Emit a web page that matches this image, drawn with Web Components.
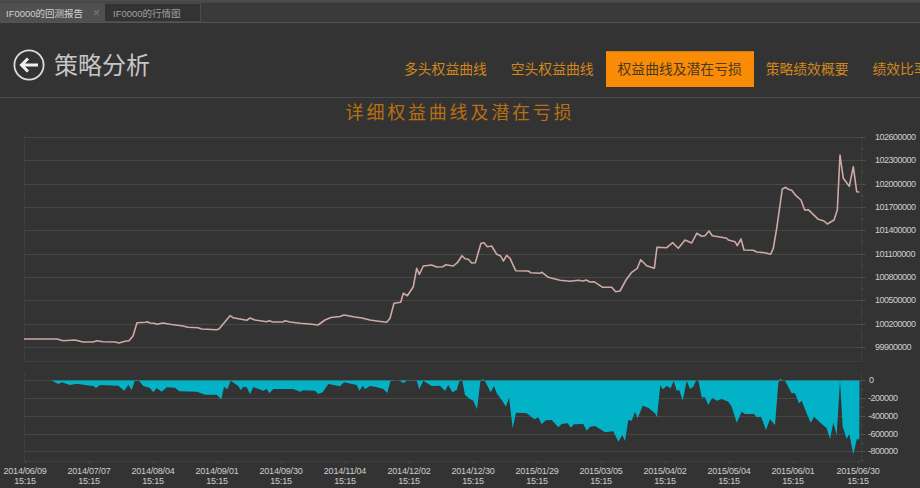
<!DOCTYPE html>
<html lang="zh-CN">

<head>
  <meta charset="UTF-8">
  <title>策略分析</title>
  <style>
    html, body { margin: 0; height: 488px; overflow: hidden; background: #333; }
    body { font-family: "Liberation Sans", "Noto Sans CJK SC", sans-serif; }
  </style>
</head>

<body>
  <tab-strip>
    <tab-item active closable>IF0000的回测报告</tab-item>
    <tab-item>IF0000的行情图</tab-item>
  </tab-strip>
  <report-header title-text="策略分析">
    <nav-item>多头权益曲线</nav-item>
    <nav-item>空头权益曲线</nav-item>
    <nav-item active>权益曲线及潜在亏损</nav-item>
    <nav-item>策略绩效概要</nav-item>
    <nav-item>绩效比率</nav-item>
  </report-header>
  <chart-title>详细权益曲线及潜在亏损</chart-title>
  <equity-chart></equity-chart>

  <script>
    const FONT = '"Liberation Sans", "Noto Sans CJK SC", sans-serif'

    class TabStrip extends HTMLElement {
      constructor() {
        super()
        this.attachShadow({ mode: 'open' }).innerHTML = `
          <style>
            :host {
              display: flex;
              height: 19px;
              padding-top: 3px;
              background: linear-gradient(#4c4c4c 0, #4c4c4c 2px, #3a3a3a 3px);
              border-bottom: 1px solid #555;
            }
          </style>
          <slot></slot>`
      }
    }
    customElements.define('tab-strip', TabStrip)

    class TabItem extends HTMLElement {
      constructor() {
        super()
        const closable = this.hasAttribute('closable')
        this.attachShadow({ mode: 'open' }).innerHTML = `
          <style>
            :host {
              display: flex;
              align-items: center;
              box-sizing: border-box;
              width: 96px;
              padding-left: 8px;
              font: 9.5px ${FONT};
              color: #a0a0a0;
              border: 1px solid #4a4a4a;
              border-left: 0;
              background: #333;
            }
            :host([active]) {
              width: 105px;
              padding-left: 6px;
              color: #d2d2d2;
              background: #505050;
              border: 0;
            }
            .close { margin-left: auto; margin-right: 5px; color: #7a7a7a; font-size: 13px; }
          </style>
          <slot></slot>${closable ? '<span class="close">×</span>' : ''}`
      }
    }
    customElements.define('tab-item', TabItem)

    class ReportHeader extends HTMLElement {
      constructor() {
        super()
        this.attachShadow({ mode: 'open' }).innerHTML = `
          <style>
            :host {
              display: flex;
              height: 74px;
              border-bottom: 1px solid #4a4a4a;
              overflow: hidden;
            }
            .brand {
              display: flex;
              align-items: center;
              gap: 9px;
              width: 392px;
              flex: none;
              box-sizing: border-box;
              padding: 20px 0 0 13px;
              height: 64px;
              font: 24px ${FONT};
              color: #c6c6c6;
            }
            .brand span { margin-bottom: 4px; }
            svg { display: block; flex: none; }
            nav { display: flex; align-items: flex-start; padding-top: 28px; }
          </style>
          <div class="brand">
            <svg width="32" height="32" viewBox="0 0 32 32">
              <circle cx="16" cy="16" r="14.6" fill="none" stroke="#dcdcdc" stroke-width="1.8"/>
              <path d="M8.5 16H25M15 9.5L8.5 16L15 22.5" fill="none" stroke="#f0f0f0" stroke-width="3"/>
            </svg>
            <span>${this.getAttribute('title-text')}</span>
          </div>
          <nav><slot></slot></nav>`
      }
    }
    customElements.define('report-header', ReportHeader)

    class NavItem extends HTMLElement {
      constructor() {
        super()
        this.attachShadow({ mode: 'open' }).innerHTML = `
          <style>
            :host {
              display: block;
              flex: none;
              box-sizing: border-box;
              height: 36px;
              padding: 0 12px;
              font: 13.8px/38px ${FONT};
              white-space: nowrap;
              color: #d2861c;
            }
            :host([active]) { background: #f98b06; color: #4a3a20; border-top: 1px solid #c67f1e; line-height: 36px; }
          </style>
          <slot></slot>`
      }
    }
    customElements.define('nav-item', NavItem)

    class ChartTitle extends HTMLElement {
      constructor() {
        super()
        this.attachShadow({ mode: 'open' }).innerHTML = `
          <style>
            :host {
              display: block;
              height: 29px;
              text-align: center;
              font: 18px/30px ${FONT};
              letter-spacing: 2.8px;
              color: #b96f12;
            }
          </style>
          <slot></slot>`
      }
    }
    customElements.define('chart-title', ChartTitle)

    // screen coordinates read off the original chart, y is relative to the page
    const EQUITY = [[24,339],[57,339],[63,340.7],[75,340],[83,342],[93,342],[97,340.7],[103,341.7],[115,342],[119,343],[125,341.3],[129,340.7],[133,336],[137,322.7],[146,322.3],[147.3,321.7],[150,323],[154,323.3],[156.7,324.3],[163,323],[170,324.3],[183,326],[188,327.3],[198,327.7],[201.7,329],[216.7,329.7],[219,329],[230,315.7],[233,317.7],[246.7,320.3],[250,318],[255,320],[266.7,321.7],[269,320.7],[273,322],[283,322],[285,320.7],[290,322],[300,323.3],[310,324],[318,325],[325,320],[331,317.5],[340,316.5],[344,315],[355,317],[362,318],[370,320],[376.7,321],[386.7,322.3],[390,318.3],[394,303.3],[400.7,302.3],[403.3,293.3],[407.3,295.7],[413.3,286.7],[416.7,268.3],[419.3,274.3],[423.3,266],[431.7,265],[436.7,267],[442.7,266.7],[446,264.7],[453.3,266],[457.3,262.7],[462,255.7],[465,258.7],[468.3,259.3],[471.7,263],[475.3,262.7],[481,243.3],[484,242.7],[487.3,246.7],[491.7,246],[496.7,254.3],[500.7,256],[503.3,261],[506.7,255.3],[510,258.3],[515.7,270.7],[528.3,271],[530.7,272.7],[540,273.3],[542,272.3],[548.3,277.3],[560,280.3],[570,281.3],[578.3,280.3],[583.3,281],[586,280],[590,282],[594,281.7],[602.7,287.3],[611.7,287.3],[615.7,291.7],[620,291],[626,280],[631.7,272.3],[637.3,268.3],[640.7,259.7],[646.7,265.7],[654.3,268.3],[657,247.3],[666.7,247.7],[672.7,242.7],[678.3,248.3],[685,240],[691.7,243],[696.7,233.3],[701.7,236.3],[705,235.7],[709,231],[712.3,235.7],[720,237],[726.7,238.3],[728.3,240],[735,241.7],[737.3,245.7],[741,239],[744,250],[753.3,250.3],[756.7,252],[765,252.7],[770.7,254.3],[773.3,248.3],[776.7,228.3],[782.3,189],[785.7,187.3],[788.3,189.3],[791.7,190.3],[796,195.7],[801,200],[804.7,210],[808.3,209.7],[818.3,219.3],[824,221],[827.3,224],[834,220],[837.3,210],[840,155],[843.3,178.3],[849.3,186.3],[853.3,166.7],[856.7,191.7],[859.3,192]]

    const DRAWDOWN = [[24,380.4],[51.7,380.4],[58.3,384],[61.7,382.3],[70,385],[76.7,383.7],[90,385.7],[93,385.7],[96,388],[100,385],[118.3,385.7],[124.3,390.7],[128.3,384.7],[131.7,390],[135,380],[138.3,380],[143.3,386],[150,388],[153.3,392.3],[156.7,388],[161.7,391.7],[166.7,387.3],[175,387.7],[179.3,391.3],[196.7,391.7],[205,394.7],[216.7,394.7],[221.3,399.3],[224,386.7],[227.3,389.3],[230.7,380.7],[238.3,386],[240.7,390],[243.3,386.7],[246.7,387.3],[250,394.3],[253.3,387],[263.3,390.7],[266.7,389],[269.3,393.3],[273.3,389],[293.3,389],[300,391.7],[303.3,390.3],[315,390.7],[318.3,394],[322.7,392.3],[328.3,384],[340,386.3],[344,382.3],[356.7,385],[359.3,390.7],[362.7,385.7],[365,389],[370,386],[375,386.7],[383.3,389],[387.3,393],[390.7,380],[400,380.7],[403.3,383.3],[406.7,380.7],[416.7,380.7],[419.3,389.3],[423.3,380.7],[431.7,386],[440,385.7],[445,390.7],[448.3,385],[452.3,392.3],[456.7,390],[460,379.3],[462.3,380.7],[465,395],[470,399],[473.3,400.7],[477,409.3],[480.3,381.7],[482.7,379],[485.3,381.7],[490.7,392.3],[494,386],[496.7,393.3],[501.7,400],[506,406.7],[509,397.3],[512.7,428.3],[516,412.7],[526.7,413.3],[534.3,419.3],[538.3,417.3],[541.7,424.3],[545.7,420.3],[551.7,420],[558.3,427.3],[561.7,424],[567.7,423.3],[570.7,427.7],[574,424.3],[583.3,424],[586.7,430.7],[590,426.7],[595,426],[600,429],[605,432.3],[613.3,431.3],[618.3,441.7],[622.3,435],[625,441],[628.3,420],[631.7,420.7],[635,411.7],[637.7,418.3],[642.7,405.7],[648.3,407.7],[655,413.3],[657,417.3],[660.3,385],[662.7,389.3],[666.7,386],[670.7,388.3],[673.7,380.7],[676.7,390.7],[679.3,390],[682.7,400.7],[686.7,380.7],[690,389],[693.3,386.7],[696,380.7],[698.3,380],[701.7,397.3],[705,397.3],[708.3,405],[712.3,397.7],[716.7,400.7],[721.7,399],[728.3,401.7],[731.7,406.7],[736.7,422.7],[741.7,411.7],[745,414],[754,414],[756.7,417.3],[761,416.7],[766,430],[770,419.3],[775,425],[778.3,383.3],[780,378.5],[781.7,380],[785,380.7],[791.7,393.3],[795,393.3],[799,403.3],[801.7,400.7],[806,411.7],[810.7,422.7],[814,416.7],[821.7,424],[826.7,428.3],[830,439],[833.3,422.7],[836.7,435],[840,380.7],[842.7,426.7],[846.7,439],[849.3,434],[853.3,454.3],[856.7,439.3],[859.3,439.3]]

    const DATES = ['2014/06/09','2014/07/07','2014/08/04','2014/09/01','2014/09/30','2014/11/04','2014/12/02','2014/12/30','2015/01/29','2015/03/05','2015/04/02','2015/05/04','2015/06/01','2015/06/30']

    class EquityChart extends HTMLElement {
      constructor() {
        super()
        // the svg starts at page y = 127
        const top = 127
        const left = 24.5, right = 861.5
        const toPts = (list) => list.map(([x, y]) => `${x},${(y - top).toFixed(1)}`).join(' ')
        let grid = ''
        let ticks = ''
        let labels = ''

        for (let i = 0; i < 10; i++) {
          const y = Math.round(137 + i * 23.33 - top) + 0.5
          grid += `<path d="M${left} ${y}H${right}"/>`
          ticks += `<path d="M${right} ${y}h4"/>`
          if (i < 9) ticks += `<path d="M${right} ${y + 11.5}h2"/>`
          labels += `<text x="875" y="${y + 2.5}">${102600000 - i * 300000}</text>`
        }
        for (let i = 0; i < 5; i++) {
          const y = Math.round(380.4 + i * 17.75 - top) + 0.5
          grid += `<path d="M${left} ${y}H${right}"/>`
          ticks += `<path d="M${right} ${y}h4"/>`
          ticks += `<path d="M${right} ${y + 9}h2"/>`
          const value = i === 0 ? '0' : '-' + i * 200000
          labels += `<text x="${i === 0 ? 869 : 868}" y="${y + 2.5}">${value}</text>`
        }

        let dates = ''
        DATES.forEach((d, i) => {
          const x = i === 13 ? 858 : 25 + i * 64
          ticks += `<path d="M${x}.5 ${461 - top}v2"/>`
          dates += `<text class="date" x="${x}" y="${474 - top}" text-anchor="middle">${d}</text>`
          dates += `<text class="date" x="${x}" y="${484 - top}" text-anchor="middle">15:15</text>`
        })

        this.attachShadow({ mode: 'open' }).innerHTML = `
          <style>
            :host { display: block; height: 361px; }
            svg { display: block; }
            text { font: 9px ${FONT}; fill: #cfcfcf; letter-spacing: -0.5px; }
            text.date { letter-spacing: -0.2px; }
            .grid path { stroke: #474747; fill: none; }
            .ticks path { stroke: #505050; fill: none; }
            .panel { stroke: #3e3e3e; fill: none; }
          </style>
          <svg width="920" height="361" viewBox="0 0 920 361">
            <path class="panel" d="M${left} 7V${361.5 - top}H${right}V7M${left} ${372.5 - top}V${461.5 - top}H${right}V${372.5 - top}"/>
            <g class="grid">${grid}</g>
            <g class="ticks">${ticks}</g>
            <polygon points="24,253.4 ${toPts(DRAWDOWN)} 859.5,253.4" fill="#02b3c8"/>
            <polyline points="${toPts(EQUITY)}" fill="none" stroke="#cfa9a6" stroke-width="1.6" stroke-linejoin="round"/>
            <g>${labels}</g>
            <g>${dates}</g>
          </svg>`
      }
    }
    customElements.define('equity-chart', EquityChart)
  </script>
</body>

</html>
